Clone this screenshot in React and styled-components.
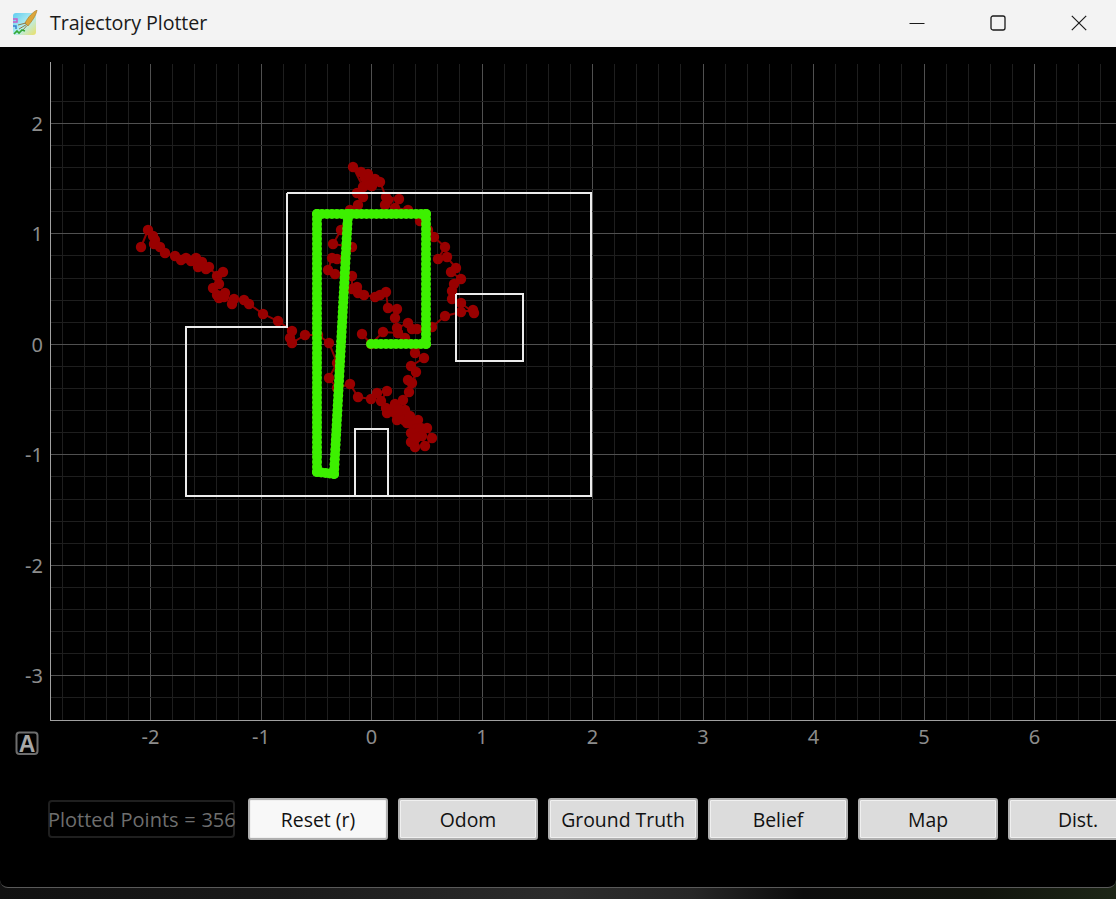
import React from "react";
import styled, { createGlobalStyle } from "styled-components";

const GlobalStyle = createGlobalStyle`
  html, body {
    margin: 0;
    height: 100%;
    overflow: hidden;
    background: linear-gradient(90deg, #111 0%, #1a1a1a 25%, #2c2c2c 50%, #262626 62%, #0c0c0c 72%, #11140d 88%, #1d2617 100%);
  }
`;

const Window = styled.div`
  width: 1116px;
  height: 888px;
  background: #000;
  border-bottom: 1px solid #5a5a5a;
  border-radius: 0 0 8px 8px;
  box-sizing: border-box;
  overflow: hidden;
  display: flex;
  flex-direction: column;
`;

const TitleBar = styled.div`
  height: 47px;
  flex: none;
  box-sizing: border-box;
  background: #f3f3f3;
  display: flex;
  align-items: center;
  padding: 0 0 2px 12px;
`;

const Title = styled.span`
  margin-left: 12px;
  font-family: "Open Sans", sans-serif;
  font-size: 19.7px;
  color: #1a1a1a;
  letter-spacing: -0.1px;
`;

const WindowButtons = styled.div`
  margin-left: auto;
  margin-right: -3px;
  display: flex;
`;

const WindowButton = styled.div`
  width: 81px;
  height: 43px;
  display: flex;
  align-items: center;
  justify-content: center;
`;

const Plot = styled.svg`
  display: block;
  flex: none;
  width: 1116px;
  height: 751px;
`;

const TickLabel = styled.text`
  font-family: "Noto Sans", sans-serif;
  font-size: 20px;
  fill: #8c8c8c;
`;

const AutoRange = styled.text`
  font-family: "Liberation Sans", sans-serif;
  font-size: 23px;
  font-weight: 700;
  fill: #a8a8a8;
`;

const Controls = styled.div`
  display: flex;
  align-items: center;
  padding-left: 48px;
  margin-top: 1px;
  height: 40px;
`;

const PointCount = styled.div`
  width: 187px;
  height: 38px;
  flex: none;
  box-sizing: border-box;
  border: 2px solid #1f1f1f;
  border-radius: 4px;
  display: flex;
  align-items: center;
  margin-right: 13px;
  text-indent: -2px;
  font-family: "Open Sans", sans-serif;
  font-size: 20px;
  word-spacing: 0.5px;
  color: #6e6e6e;
  white-space: nowrap;
`;

const PlotButton = styled.button`
  width: ${(props) => props.$width}px;
  height: 42px;
  flex: none;
  margin-right: 10px;
  padding: 0;
  box-sizing: border-box;
  background: ${(props) => (props.$active ? "#f8f8f8" : "#dcdcdc")};
  border: 2px solid #b0b0b0;
  border-radius: 3px;
  box-shadow: 0 0 0 1px #f0f0f0 inset;
  font-family: "Open Sans", sans-serif;
  font-size: 19.4px;
  color: #111;
`;

const toX = (v) => 371 + v * 110.5;
const toY = (v) => 297.3 - v * 110.5; // svg starts under the title bar

const PLOT_LEFT = 51;
const PLOT_TOP = 17;
const PLOT_BOTTOM = 673;

const minorSteps = [];
for (let i = -14; i <= 36; i++) minorSteps.push(i / 5);

const rowSteps = [];
for (let i = -17; i <= 11; i++) rowSteps.push(i / 5);

const odomPoints = [
  [141, 247], [148, 230], [153, 236], [155, 240], [154, 244], [160, 247], [165, 253], [175, 256],
  [181, 260], [186, 258], [191, 261], [196, 258], [198, 267], [202, 262], [206, 269], [209, 267],
  [217, 276], [223, 272], [219, 284], [213, 288], [217, 295], [219, 298], [225, 293], [224, 297],
  [232, 304], [234, 299], [244, 300], [249, 304], [263, 314], [278, 321], [292, 331], [290, 338],
  [292, 343], [305, 335], [318, 335], [329, 343], [337, 363], [329, 378], [337, 388], [350, 384],
  [358, 397], [371, 399], [377, 393], [387, 391], [381, 401], [386, 408], [387, 413], [392, 410],
  [395, 404], [395, 413], [397, 420], [400, 417], [402, 413], [405, 410], [399, 409], [404, 420],
  [408, 420], [407, 423], [410, 416], [413, 425], [418, 420], [416, 429], [421, 428], [427, 428],
  [432, 438], [425, 446], [422, 436], [415, 447], [411, 442], [411, 433], [416, 438], [403, 400],
  [409, 392], [408, 380], [412, 383], [416, 372], [411, 366], [424, 358], [415, 353], [415, 347],
  [405, 338], [398, 333], [397, 328], [408, 323], [412, 329], [417, 329], [432, 327], [445, 316],
  [461, 312], [473, 310], [474, 313], [461, 303], [452, 299], [452, 291], [454, 284], [461, 279],
  [451, 272], [456, 268], [447, 257], [438, 259], [445, 247], [434, 237], [428, 230], [420, 221],
  [408, 210], [395, 208], [385, 205], [388, 200], [399, 199], [386, 197], [380, 182], [375, 179],
  [370, 180], [372, 186], [365, 178], [368, 174], [361, 172], [353, 167], [363, 187], [370, 185],
  [357, 193], [363, 197], [358, 205], [350, 210], [341, 230], [333, 244], [352, 247], [337, 259],
  [332, 258], [328, 270], [335, 274], [352, 276], [352, 289], [357, 287], [358, 293], [364, 295],
  [375, 297], [380, 295], [386, 292], [388, 308], [397, 309], [395, 318], [398, 333], [383, 332],
  [371, 344], [362, 334],
];

const truthCorners = [[371, 344], [426, 344], [426, 214], [317, 214], [317, 472], [334, 474], [348, 214]];

const truthPoints = [];
truthCorners.slice(1).forEach(([x, y], i) => {
  const [px, py] = truthCorners[i];
  const steps = Math.ceil(Math.hypot(x - px, y - py) / 5);
  for (let s = 0; s <= steps; s++) {
    truthPoints.push([px + ((x - px) * s) / steps, py + ((y - py) * s) / steps]);
  }
});

const mapLines = [
  "287,193 591,193 591,496 186,496 186,327 287,327 287,193",
  "456,294 523,294 523,361 456,361 456,294",
  "355,496 355,429 388,429 388,496",
];

const buttons = [
  { label: "Reset (r)", width: 140, active: true },
  { label: "Odom", width: 140 },
  { label: "Ground Truth", width: 150 },
  { label: "Belief", width: 140 },
  { label: "Map", width: 140 },
  { label: "Dist.", width: 140 },
];

const AppIcon = () => (
  <svg width="26" height="26" viewBox="0 0 26 26">
    <defs>
      <linearGradient id="iconBg" x1="0" y1="0" x2="1" y2="1">
        <stop offset="0" stopColor="#5fcdf0" />
        <stop offset="0.55" stopColor="#b8eef0" />
        <stop offset="1" stopColor="#ecdf66" />
      </linearGradient>
    </defs>
    <rect x="1" y="3" width="23" height="22" rx="3" fill="url(#iconBg)" />
    <path d="M25 0 C21 2 16 7 13 13 L16 16 C20 11 24 6 25 0Z" fill="#dca63a" stroke="#a8761e" strokeWidth="0.6" />
    <path d="M14 13 L6 15 M14.5 14.5 L7 19 M15 15.5 L10 21" stroke="#8f7a45" strokeWidth="1" fill="none" />
    <path d="M1 9 H5 V12 H1" stroke="#c65cc6" strokeWidth="1.5" fill="none" />
    <path d="M1 16 H4 V19" stroke="#3a7fd0" strokeWidth="1.5" fill="none" />
    <path d="M2 24 L5 21 L7 23 L10 20 L13 21" stroke="#35a835" strokeWidth="1.7" fill="none" />
  </svg>
);

const App = () => (
  <Window>
    <GlobalStyle />
    <TitleBar>
      <AppIcon />
      <Title>Trajectory Plotter</Title>
      <WindowButtons>
        <WindowButton>
          <svg width="16" height="16" viewBox="0 0 16 16">
            <path d="M0.5 8.5 H15.5" stroke="#1a1a1a" strokeWidth="1" />
          </svg>
        </WindowButton>
        <WindowButton>
          <svg width="16" height="16" viewBox="0 0 16 16">
            <rect x="1" y="1" width="14" height="14" rx="2" fill="none" stroke="#1a1a1a" strokeWidth="1.3" />
          </svg>
        </WindowButton>
        <WindowButton>
          <svg width="16" height="16" viewBox="0 0 16 16">
            <path d="M0.8 0.8 L15.2 15.2 M15.2 0.8 L0.8 15.2" stroke="#1a1a1a" strokeWidth="1.2" />
          </svg>
        </WindowButton>
      </WindowButtons>
    </TitleBar>

    <Plot viewBox="0 0 1116 751">
      <g shapeRendering="crispEdges">
        {minorSteps.map((v) => (
          <line
            key={`v${v}`}
            x1={Math.round(toX(v)) + 0.5}
            x2={Math.round(toX(v)) + 0.5}
            y1={PLOT_TOP}
            y2={PLOT_BOTTOM}
            stroke={Number.isInteger(v) ? "#505050" : "#1e1e1e"}
          />
        ))}
        {rowSteps.map((v) => (
          <line
            key={`h${v}`}
            x1={PLOT_LEFT}
            x2={1116}
            y1={Math.floor(toY(v)) + 0.5}
            y2={Math.floor(toY(v)) + 0.5}
            stroke={Number.isInteger(v) ? "#505050" : "#1e1e1e"}
          />
        ))}
        <path d="M50.5 15 V673.5 H1116" fill="none" stroke="#a0a0a0" />
      </g>

      {[-2, -1, 0, 1, 2, 3, 4, 5, 6].map((v) => (
        <TickLabel key={v} x={toX(v) + 0.5} y={697} textAnchor="middle">
          {v}
        </TickLabel>
      ))}
      {[2, 1, 0, -1, -2, -3].map((v) => (
        <TickLabel key={v} x={43} y={toY(v) + 7.5} textAnchor="end">
          {v}
        </TickLabel>
      ))}

      <rect x="16.5" y="685.5" width="21" height="21.5" rx="3" fill="none" stroke="#6e6e6e" strokeWidth="2" />
      <AutoRange x={27} y={704.5} textAnchor="middle">A</AutoRange>

      <g transform="translate(0 -47)">
        <polyline points={odomPoints.join(" ")} fill="none" stroke="#8f0000" strokeWidth="2" />
        {odomPoints.map(([x, y], i) => (
          <circle key={i} cx={x} cy={y} r="5.2" fill="#990000" />
        ))}
        {mapLines.map((points) => (
          <polyline key={points} points={points} fill="none" stroke="#ececec" strokeWidth="2" />
        ))}
        {truthPoints.map(([x, y], i) => (
          <circle key={i} cx={x} cy={y} r="5" fill="#3df000" />
        ))}
      </g>
    </Plot>

    <Controls>
      <PointCount>Plotted Points = 356</PointCount>
      {buttons.map((button) => (
        <PlotButton key={button.label} $width={button.width} $active={button.active}>
          {button.label}
        </PlotButton>
      ))}
    </Controls>
  </Window>
);

export default App;
